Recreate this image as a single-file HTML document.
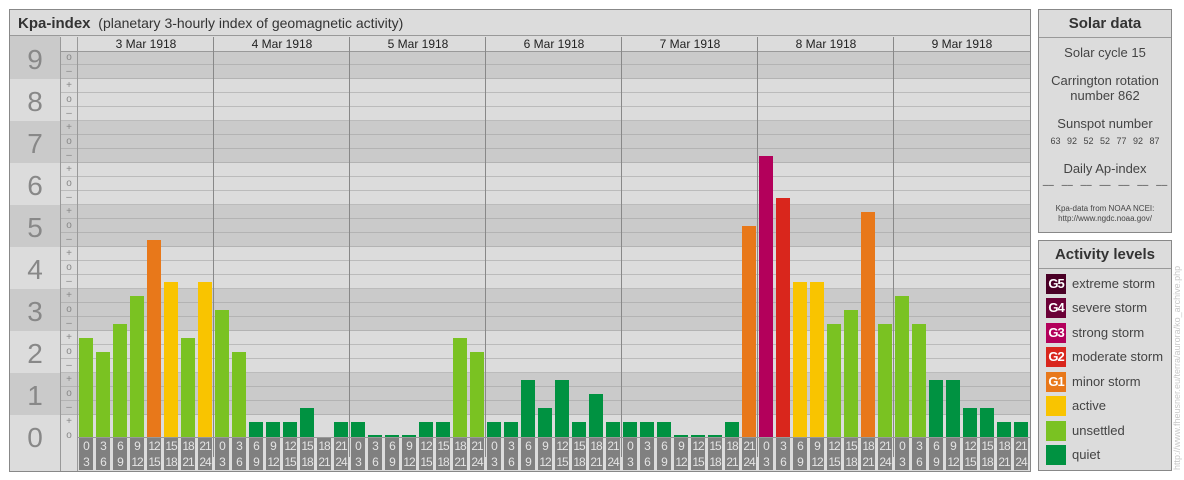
<!DOCTYPE html>
<html><head><meta charset="utf-8"><style>
*{margin:0;padding:0;box-sizing:border-box}
body{width:1184px;height:480px;background:#fff;font-family:"Liberation Sans",sans-serif;position:relative;overflow:hidden}
.a{position:absolute}
.b{position:absolute;width:14px}
.q{background:#009241}.u{background:#7ac222}.y{background:#f9c400}.o{background:#e8781a}.r{background:#d9261c}.m{background:#b3005b}
.t{position:absolute;top:438px;width:14px;height:32px;background:#808080;color:#e4e4e4;font-size:12px;line-height:16px;text-align:center;letter-spacing:-1px}
.d{position:absolute;top:37px;width:136px;height:14px;font-size:12px;line-height:14px;text-align:center;color:#222}
.v{position:absolute;top:51px;width:1px;height:420px;background:#888}
.lv{position:absolute;left:10px;width:50px;font-size:28px;color:#888;text-align:center}
.tk{position:absolute;left:61px;width:16px;font-size:10px;color:#888;text-align:center;line-height:14px}
.leg{position:absolute;left:1046px;width:20px;height:20px;color:#fff;font-size:13px;font-weight:bold;line-height:20px;text-align:center;letter-spacing:-1px}
.lt{position:absolute;left:1072px;font-size:13px;color:#444;line-height:20px}
.sd{position:absolute;left:1039px;width:132px;text-align:center;color:#444}
</style></head><body>
<!-- main panel -->
<div class="a" style="left:9px;top:9px;width:1022px;height:463px;border:1px solid #888;background:#dcdcdc"></div>
<div class="a" style="left:10px;top:10px;width:1020px;height:26px;border-bottom:1px solid #999;background:#dcdcdc;font-size:14px;line-height:26px;padding-left:8px;color:#333"><b style="font-size:15px">Kpa-index</b>&nbsp; (planetary 3-hourly index of geomagnetic activity)</div>
<!-- bands -->
<div class="a" style="left:10px;top:51px;width:1020px;height:28px;background:#cacaca"></div>
<div class="a" style="left:10px;top:121px;width:1020px;height:42px;background:#cacaca"></div>
<div class="a" style="left:10px;top:205px;width:1020px;height:42px;background:#cacaca"></div>
<div class="a" style="left:10px;top:289px;width:1020px;height:42px;background:#cacaca"></div>
<div class="a" style="left:10px;top:373px;width:1020px;height:42px;background:#cacaca"></div>
<!-- grid lines -->
<div class="a" style="left:61px;top:51px;width:969px;height:373px;background:repeating-linear-gradient(to bottom,transparent 0,transparent 13px,rgba(160,160,160,.55) 13px,rgba(160,160,160,.55) 14px)"></div>
<div class="a" style="left:61px;top:51px;width:969px;height:1px;background:#999"></div>
<div class="a" style="left:60px;top:37px;width:1px;height:434px;background:#999"></div>
<div class="a" style="left:77px;top:37px;width:1px;height:434px;background:#999"></div>
<div class="a" style="left:10px;top:36px;width:50px;height:15px;background:#cacaca"></div>
<!-- level labels -->
<div class="lv" style="top:44px">9</div><div class="lv" style="top:86px">8</div><div class="lv" style="top:128px">7</div><div class="lv" style="top:170px">6</div><div class="lv" style="top:212px">5</div><div class="lv" style="top:254px">4</div><div class="lv" style="top:296px">3</div><div class="lv" style="top:338px">2</div><div class="lv" style="top:380px">1</div><div class="lv" style="top:422px">0</div>
<!-- ticks -->
<div class="tk" style="top:51px">o<br>–<br>+<br>o<br>–<br>+<br>o<br>–<br>+<br>o<br>–<br>+<br>o<br>–<br>+<br>o<br>–<br>+<br>o<br>–<br>+<br>o<br>–<br>+<br>o<br>–<br>+<br>o</div>
<!-- day headers & separators -->
<div class="d" style="left:78px">3 Mar 1918</div><div class="d" style="left:214px">4 Mar 1918</div><div class="d" style="left:350px">5 Mar 1918</div><div class="d" style="left:486px">6 Mar 1918</div><div class="d" style="left:622px">7 Mar 1918</div><div class="d" style="left:758px">8 Mar 1918</div><div class="d" style="left:894px">9 Mar 1918</div>
<div class="v" style="left:213px;top:37px"></div><div class="v" style="left:349px;top:37px"></div><div class="v" style="left:485px;top:37px"></div><div class="v" style="left:621px;top:37px"></div><div class="v" style="left:757px;top:37px"></div><div class="v" style="left:893px;top:37px"></div>
<!-- bars day1 -->
<div class="b u" style="left:79px;top:338px;height:99px"></div><div class="b u" style="left:96px;top:352px;height:85px"></div><div class="b u" style="left:113px;top:324px;height:113px"></div><div class="b u" style="left:130px;top:296px;height:141px"></div><div class="b o" style="left:147px;top:240px;height:197px"></div><div class="b y" style="left:164px;top:282px;height:155px"></div><div class="b u" style="left:181px;top:338px;height:99px"></div><div class="b y" style="left:198px;top:282px;height:155px"></div>
<!-- day2 -->
<div class="b u" style="left:215px;top:310px;height:127px"></div><div class="b u" style="left:232px;top:352px;height:85px"></div><div class="b q" style="left:249px;top:422px;height:15px"></div><div class="b q" style="left:266px;top:422px;height:15px"></div><div class="b q" style="left:283px;top:422px;height:15px"></div><div class="b q" style="left:300px;top:408px;height:29px"></div><div class="b q" style="left:334px;top:422px;height:15px"></div>
<!-- day3 -->
<div class="b q" style="left:351px;top:422px;height:15px"></div><div class="b q" style="left:368px;top:435px;height:2px"></div><div class="b q" style="left:385px;top:435px;height:2px"></div><div class="b q" style="left:402px;top:435px;height:2px"></div><div class="b q" style="left:419px;top:422px;height:15px"></div><div class="b q" style="left:436px;top:422px;height:15px"></div><div class="b u" style="left:453px;top:338px;height:99px"></div><div class="b u" style="left:470px;top:352px;height:85px"></div>
<!-- day4 -->
<div class="b q" style="left:487px;top:422px;height:15px"></div><div class="b q" style="left:504px;top:422px;height:15px"></div><div class="b q" style="left:521px;top:380px;height:57px"></div><div class="b q" style="left:538px;top:408px;height:29px"></div><div class="b q" style="left:555px;top:380px;height:57px"></div><div class="b q" style="left:572px;top:422px;height:15px"></div><div class="b q" style="left:589px;top:394px;height:43px"></div><div class="b q" style="left:606px;top:422px;height:15px"></div>
<!-- day5 -->
<div class="b q" style="left:623px;top:422px;height:15px"></div><div class="b q" style="left:640px;top:422px;height:15px"></div><div class="b q" style="left:657px;top:422px;height:15px"></div><div class="b q" style="left:674px;top:435px;height:2px"></div><div class="b q" style="left:691px;top:435px;height:2px"></div><div class="b q" style="left:708px;top:435px;height:2px"></div><div class="b q" style="left:725px;top:422px;height:15px"></div><div class="b o" style="left:742px;top:226px;height:211px"></div>
<!-- day6 -->
<div class="b m" style="left:759px;top:156px;height:281px"></div><div class="b r" style="left:776px;top:198px;height:239px"></div><div class="b y" style="left:793px;top:282px;height:155px"></div><div class="b y" style="left:810px;top:282px;height:155px"></div><div class="b u" style="left:827px;top:324px;height:113px"></div><div class="b u" style="left:844px;top:310px;height:127px"></div><div class="b o" style="left:861px;top:212px;height:225px"></div><div class="b u" style="left:878px;top:324px;height:113px"></div>
<!-- day7 -->
<div class="b u" style="left:895px;top:296px;height:141px"></div><div class="b u" style="left:912px;top:324px;height:113px"></div><div class="b q" style="left:929px;top:380px;height:57px"></div><div class="b q" style="left:946px;top:380px;height:57px"></div><div class="b q" style="left:963px;top:408px;height:29px"></div><div class="b q" style="left:980px;top:408px;height:29px"></div><div class="b q" style="left:997px;top:422px;height:15px"></div><div class="b q" style="left:1014px;top:422px;height:15px"></div>
<!-- baseline -->
<div class="a" style="left:78px;top:437px;width:952px;height:1px;background:#999"></div>
<!-- tick labels -->
<div class="t" style="left:79px">0<br>3</div><div class="t" style="left:96px">3<br>6</div><div class="t" style="left:113px">6<br>9</div><div class="t" style="left:130px">9<br>12</div><div class="t" style="left:147px">12<br>15</div><div class="t" style="left:164px">15<br>18</div><div class="t" style="left:181px">18<br>21</div><div class="t" style="left:198px">21<br>24</div>
<div class="t" style="left:215px">0<br>3</div><div class="t" style="left:232px">3<br>6</div><div class="t" style="left:249px">6<br>9</div><div class="t" style="left:266px">9<br>12</div><div class="t" style="left:283px">12<br>15</div><div class="t" style="left:300px">15<br>18</div><div class="t" style="left:317px">18<br>21</div><div class="t" style="left:334px">21<br>24</div>
<div class="t" style="left:351px">0<br>3</div><div class="t" style="left:368px">3<br>6</div><div class="t" style="left:385px">6<br>9</div><div class="t" style="left:402px">9<br>12</div><div class="t" style="left:419px">12<br>15</div><div class="t" style="left:436px">15<br>18</div><div class="t" style="left:453px">18<br>21</div><div class="t" style="left:470px">21<br>24</div>
<div class="t" style="left:487px">0<br>3</div><div class="t" style="left:504px">3<br>6</div><div class="t" style="left:521px">6<br>9</div><div class="t" style="left:538px">9<br>12</div><div class="t" style="left:555px">12<br>15</div><div class="t" style="left:572px">15<br>18</div><div class="t" style="left:589px">18<br>21</div><div class="t" style="left:606px">21<br>24</div>
<div class="t" style="left:623px">0<br>3</div><div class="t" style="left:640px">3<br>6</div><div class="t" style="left:657px">6<br>9</div><div class="t" style="left:674px">9<br>12</div><div class="t" style="left:691px">12<br>15</div><div class="t" style="left:708px">15<br>18</div><div class="t" style="left:725px">18<br>21</div><div class="t" style="left:742px">21<br>24</div>
<div class="t" style="left:759px">0<br>3</div><div class="t" style="left:776px">3<br>6</div><div class="t" style="left:793px">6<br>9</div><div class="t" style="left:810px">9<br>12</div><div class="t" style="left:827px">12<br>15</div><div class="t" style="left:844px">15<br>18</div><div class="t" style="left:861px">18<br>21</div><div class="t" style="left:878px">21<br>24</div>
<div class="t" style="left:895px">0<br>3</div><div class="t" style="left:912px">3<br>6</div><div class="t" style="left:929px">6<br>9</div><div class="t" style="left:946px">9<br>12</div><div class="t" style="left:963px">12<br>15</div><div class="t" style="left:980px">15<br>18</div><div class="t" style="left:997px">18<br>21</div><div class="t" style="left:1014px">21<br>24</div>

<!-- Solar data panel -->
<div class="a" style="left:1038px;top:9px;width:134px;height:224px;border:1px solid #888;background:#dcdcdc"></div>
<div class="a" style="left:1039px;top:10px;width:132px;height:28px;border-bottom:1px solid #999;text-align:center;font-size:15px;font-weight:bold;line-height:28px;color:#333">Solar data</div>
<div class="sd" style="top:45px;font-size:13px">Solar cycle 15</div>
<div class="sd" style="top:73px;font-size:13px;line-height:15px">Carrington rotation<br>number 862</div>
<div class="sd" style="top:116px;font-size:13px">Sunspot number</div>
<div class="sd" style="top:136px;font-size:9px;word-spacing:4px">63 92 52 52 77 92 87</div>
<div class="sd" style="top:161px;font-size:13px">Daily Ap-index</div>
<div class="sd" style="top:180px;font-size:10px;word-spacing:5px">–– –– –– –– –– –– ––</div>
<div class="sd" style="top:204px;font-size:8px;line-height:10px">Kpa-data from NOAA NCEI:<br>http://www.ngdc.noaa.gov/</div>

<!-- Activity levels -->
<div class="a" style="left:1038px;top:240px;width:134px;height:231px;border:1px solid #888;background:#dcdcdc"></div>
<div class="a" style="left:1039px;top:241px;width:132px;height:28px;border-bottom:1px solid #999;text-align:center;font-size:15px;font-weight:bold;line-height:28px;color:#333">Activity levels</div>
<div class="leg" style="top:274px;background:#4a0026">G5</div><div class="lt" style="top:274px">extreme storm</div>
<div class="leg" style="top:298px;background:#6b0037">G4</div><div class="lt" style="top:298px">severe storm</div>
<div class="leg" style="top:323px;background:#b3005b">G3</div><div class="lt" style="top:323px">strong storm</div>
<div class="leg" style="top:347px;background:#d9261c">G2</div><div class="lt" style="top:347px">moderate storm</div>
<div class="leg" style="top:372px;background:#e8781a">G1</div><div class="lt" style="top:372px">minor storm</div>
<div class="leg" style="top:396px;background:#f9c400"></div><div class="lt" style="top:396px">active</div>
<div class="leg" style="top:421px;background:#7ac222"></div><div class="lt" style="top:421px">unsettled</div>
<div class="leg" style="top:445px;background:#009241"></div><div class="lt" style="top:445px">quiet</div>

<div class="a" style="left:1172px;top:470px;transform-origin:0 0;transform:rotate(-90deg);font-size:9px;color:#c8c8c8;white-space:nowrap;width:230px">http://www.fheusner.eu/terra/aurora/ko_archive.php</div>
</body></html>
